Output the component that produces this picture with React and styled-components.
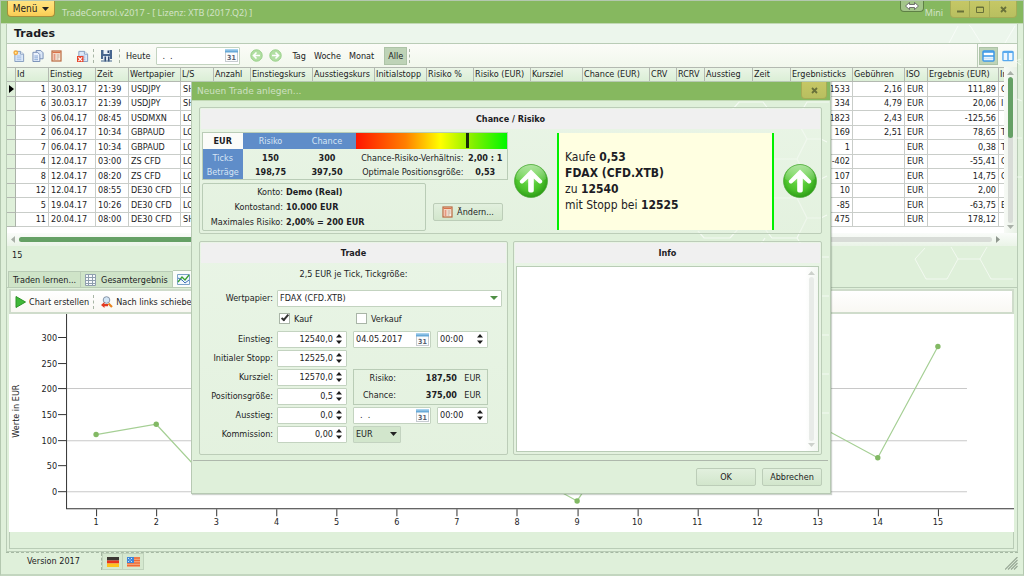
import React from "react";
import styled, { createGlobalStyle, css } from "styled-components";

const c = {
  mint: "#dff0da",
  mintLight: "#ecf6ec",
  bar: "#86b85f",
  line: "#b9ccb6",
  gridLine: "#c9cdc9",
  text: "#1c1c24",
  blue: "#5f8dc9",
  pale: "#f0f0f0",
};

const Global = createGlobalStyle`
  *, *::before, *::after { box-sizing: border-box; }
  body { margin: 0; background: ${c.mint}; overflow: hidden; }
  body, button, input, select, textarea, table {
    font-family: "DejaVu Sans Condensed", "DejaVu Sans", sans-serif;
    font-size: 9px;
    line-height: 12px;
    color: ${c.text};
  }
  button { padding: 0; margin: 0; }
`;

/* ---------- window frame ---------- */

const Window = styled.div`
  position: relative;
  display: flex;
  flex-direction: column;
  min-height: 100vh;
  border: 1px solid #b4c8b0;
  border-bottom: 2px solid #c3d6bf;
  background: ${c.mint};
`;

const TitleBar = styled.header`
  display: flex;
  align-items: flex-start;
  height: 23px;
  padding: 0 6px;
  background: ${c.bar};
  border-bottom: 1px solid #c2d9b5;
`;

const MenuButton = styled.button`
  display: flex;
  align-items: center;
  justify-content: center;
  gap: 5px;
  width: 48px;
  height: 16px;
  border: 1px solid #a58f3b;
  border-top: 0;
  border-radius: 0 0 4px 4px;
  background: linear-gradient(#ffe382, #ffd966 60%, #f8cb55);
  font-size: 10px;
`;

const AppTitle = styled.h1`
  flex: 1;
  margin: 0;
  padding: 5px 0 0 7px;
  font: 400 9px/14px "Noto Sans", sans-serif;
  color: #d2e3c6;
`;

const ResizeTag = styled.button`
  display: flex;
  align-items: center;
  justify-content: center;
  width: 24px;
  height: 11px;
  border: 1px solid #5f8046;
  border-top: 0;
  border-radius: 0 0 4px 4px;
  background: #a3c589;
`;

const MiniButton = styled.button`
  width: 20px;
  margin: 5px 6px 0 0;
  border: 0;
  background: none;
  font: 400 9px/14px "Noto Sans", sans-serif;
  color: #d2e3c6;
`;

const WindowButtons = styled.div`
  display: flex;
`;

const WindowButton = styled.button`
  display: flex;
  align-items: center;
  justify-content: center;
  width: ${(p) => p.$width || 20}px;
  height: 17px;
  border: 1px solid #a5ac55;
  border-top: 0;
  background: linear-gradient(#c6c765, #b8bf60);
  & + & { border-left: 0; }
  &:first-child { border-bottom-left-radius: 4px; }
  &:last-child { border-bottom-right-radius: 4px; }
`;

const Frame = styled.main`
  flex: 1;
  display: flex;
  flex-direction: column;
  margin: 0 5px;
  border: 1px solid ${c.line};
  border-top: 0;
  min-width: 0;
`;

const PageHeading = styled.h2`
  margin: 0;
  padding: 2px 7px;
  height: 20px;
  font: 700 11px/16px "DejaVu Sans", sans-serif;
  background: ${c.mintLight};
  border-bottom: 1px solid ${c.line};
`;

/* ---------- toolbar ---------- */

const Toolbar = styled.div`
  display: flex;
  align-items: center;
  height: 23px;
  background: linear-gradient(#fbfcf8, #f1f7ec);
`;

const ToolGroup = styled.div`
  display: flex;
  align-items: center;
  gap: ${(p) => p.$gap || 0}px;
  padding: 0 ${(p) => p.$pad || 0}px;
`;

const ToolButton = styled.button`
  display: flex;
  align-items: center;
  justify-content: center;
  gap: 3px;
  height: 18px;
  padding: 0 ${(p) => p.$pad || 0}px;
  border: 1px solid transparent;
  background: none;
  white-space: nowrap;
  ${(p) =>
    p.$active &&
    css`
      background: #bed3b7;
      border-color: #adc3a7;
    `}
`;

const Dots = styled.span`
  height: 14px;
  border-left: 1px dashed #a9b6a6;
`;

const ViewGroup = styled(ToolGroup)`
  margin-left: auto;
  height: 100%;
  border-left: 1px solid ${c.line};
`;

const Field = styled.span`
  display: flex;
  align-items: center;
  width: ${(p) => p.$width}px;
  height: ${(p) => p.$height || 17}px;
  padding: 0 ${(p) => p.$right || 4}px 0 2px;
  border: 1px solid #c3d3c0;
  background: #fff;
  border-radius: 1px;
`;

const Input = styled.input`
  flex: 1;
  min-width: 0;
  width: 0;
  height: 100%;
  padding: 0 3px 0 ${(p) => p.$indent || 0}px;
  border: 0;
  outline: 0;
  background: none;
  text-align: ${(p) => p.$align || "left"};
  white-space: pre;
`;

const BareButton = styled.button`
  display: flex;
  flex-direction: column;
  border: 0;
  background: none;
`;

/* ---------- trades grid ---------- */

const GridArea = styled.section`
  display: flex;
  height: 166px;
  background: #fff;
`;

const GridScroll = styled.div`
  flex: 1;
  min-width: 0;
  overflow: hidden;
`;

const Table = styled.table`
  width: 998px;
  height: 160px;
  table-layout: fixed;
  border-collapse: separate;
  border-spacing: 0;
`;

const Th = styled.th`
  height: 15px;
  padding: 0 0 0 1px;
  font-weight: 400;
  text-align: left;
  vertical-align: top;
  white-space: nowrap;
  overflow: hidden;
  background: linear-gradient(#eaf5e6, #dbeed6);
  border: 1px solid #b3b9b1;
  border-left: 0;
`;

const Td = styled.td`
  height: 14px;
  padding: 0 2px;
  text-align: ${(p) => (p.$right ? "right" : "left")};
  white-space: nowrap;
  overflow: hidden;
  border-right: 1px solid ${c.gridLine};
  border-bottom: 1px solid ${c.gridLine};
`;

const RowHead = styled.th`
  padding: 0;
  background: ${c.mint};
  border-right: 1px solid #aab2a8;
  border-bottom: 1px solid #b3b9b1;
  svg { display: block; margin: auto; }
`;

const VScroll = styled.div`
  display: flex;
  flex-direction: column;
  align-items: center;
  gap: 2px;
  width: 13px;
  padding: 4px 0;
  background: linear-gradient(90deg, #f7faf6, #e8f1e5);
`;

const VTrack = styled.div`
  flex: 1;
  width: 5px;
  border-radius: 3px;
  background: #d8dcd7;
  overflow: hidden;
`;

const VThumb = styled.div`
  height: 42%;
  border-radius: 3px;
  background: #65a065;
`;

const HScroll = styled.div`
  display: flex;
  align-items: center;
  gap: 4px;
  height: 13px;
  padding: 0 17px 0 4px;
  background: linear-gradient(#fafcfa, #eaf4e7);
`;

const HTrack = styled.div`
  flex: 1;
  height: 5px;
  border-radius: 3px;
  background: #d8dcd7;
`;

const HThumb = styled.div`
  width: 62%;
  height: 5px;
  border-radius: 3px;
  background: #65a065;
`;

const Count = styled.div`
  padding: 3px 5px;
  height: 24px;
`;

/* ---------- tabs and chart ---------- */

const Tabs = styled.nav`
  display: flex;
  align-items: flex-end;
  height: 17px;
  padding-left: 1px;
`;

const Tab = styled.button`
  display: flex;
  align-items: center;
  gap: 5px;
  height: ${(p) => (p.$active ? 17 : 16)}px;
  padding: 0 4px;
  border: 1px solid ${c.line};
  border-bottom: 0;
  background: ${(p) => (p.$active ? "#fbfdfa" : "#cfe4c8")};
  white-space: nowrap;
  & + & { border-left: 0; }
`;

const Pane = styled.section`
  flex: 1;
  display: flex;
  flex-direction: column;
  border-top: 1px solid ${c.line};
  margin-bottom: 2px;
  padding: 1px 3px 0 2px;
`;

const ChartToolbar = styled.div`
  display: flex;
  align-items: center;
  gap: 3px;
  height: 25px;
  padding: 0 3px;
  border: 2px solid #cfdccb;
  background: linear-gradient(#fff, #f9f8f3);
`;

const ChartBox = styled.div`
  height: 218px;
  background: #fff;
  overflow: hidden;
  svg { display: block; width: 100%; height: 100%; }
`;

const ChartFoot = styled.div`
  flex: 1;
  border: 1px solid ${c.line};
  border-top: 0;
`;

const StatusBar = styled.footer`
  display: flex;
  align-items: flex-start;
  height: 22px;
  margin: 0 5px;
  border-top: 1px dashed #a5b8a2;
`;

const Version = styled.span`
  width: 96px;
  height: 17px;
  padding: 2px 0 0 21px;
  border-right: 1px dashed #a5b8a2;
`;

const FlagButton = styled.button`
  display: flex;
  align-items: center;
  justify-content: center;
  width: 21px;
  height: 17px;
  border: 1px solid #c0d3bc;
  background: #d5e8cf;
  & + & { border-left: 0; }
`;

const Grip = styled.span`
  align-self: center;
  margin-left: auto;
  height: 13px;
`;

/* ---------- dialog ---------- */

const Overlay = styled.div`
  position: absolute;
  inset: 0;
  display: flex;
  justify-content: center;
  align-items: flex-start;
  padding: 80px 2px 0 0;
`;

const Dialog = styled.div`
  position: relative;
  width: 640px;
  border: 1px solid #b7c9b3;
  background: ${c.mint};
  box-shadow: 1px 1px 1px rgba(90, 110, 90, 0.3);
`;

const DialogBar = styled.header`
  display: flex;
  justify-content: space-between;
  height: 19px;
  padding: 0 3px 0 5px;
  background: ${c.bar};
  border-bottom: 1px solid #c2d9b5;
`;

const DialogTitle = styled.h2`
  margin: 0;
  font: 400 9px/18px "DejaVu Sans", sans-serif;
  color: #cfe0c3;
`;

const DialogBody = styled.div`
  position: relative;
  display: flex;
  flex-direction: column;
  gap: 7px;
  padding: 6px 8px 5px 7px;
`;

const Columns = styled.div`
  display: grid;
  grid-template-columns: 309px 1fr;
  gap: 5px;
`;

const Panel = styled.section`
  position: relative;
  display: flex;
  flex-direction: column;
  padding: 1px;
  border: 1px solid #bccdb8;
  border-radius: 2px;
  background: linear-gradient(rgba(240, 248, 238, 0.6), rgba(232, 243, 228, 0.5));
`;

const PanelTitle = styled.h3`
  margin: 0;
  height: 20px;
  font-size: 9px;
  line-height: 20px;
  text-align: center;
  background: ${c.pale};
`;

const RiskRow = styled.div`
  display: flex;
  align-items: center;
  gap: 6px;
  padding: 3px 0 1px 1px;
`;

const RiskLeft = styled.div`
  display: flex;
  flex-direction: column;
  gap: 3px;
  width: 306px;
`;

const RiskTable = styled.table`
  width: 100%;
  table-layout: fixed;
  border-collapse: collapse;
  border: 1px solid ${c.line};
  text-align: center;
  th, td { padding: 0; white-space: nowrap; }
`;

const BlueTh = styled.th`
  height: ${(p) => p.$h || 13}px;
  padding: 0;
  font-weight: 400;
  color: #d7e5f5;
  background: ${c.blue};
`;

const Corner = styled.th`
  height: 16px;
  background: #fbfcf9;
`;

const RiskTd = styled.td`
  font-weight: ${(p) => (p.$label ? 400 : 700)};
  text-align: ${(p) => (p.$label ? "right" : "center")};
`;

const Meter = styled.div`
  height: 16px;
  padding-left: 110px;
  background: linear-gradient(90deg, #ff1500, #ff8000 33%, #ffff00 56%, #80f000 78%, #00f800);
`;

const Marker = styled.div`
  width: 3px;
  height: 15px;
  background: #1a2a08;
`;

const AccountRow = styled.div`
  display: flex;
  align-items: flex-end;
  gap: 7px;
`;

const AccountBox = styled.dl`
  display: grid;
  grid-template-columns: 80px 1fr;
  gap: 3px;
  width: 224px;
  margin: 0;
  padding: 2px 0;
  border: 1px solid ${c.line};
  border-radius: 2px;
  white-space: nowrap;
  dt { text-align: right; }
  dd { margin: 0; font-weight: 700; }
`;

const AccountAction = styled.div`
  padding-bottom: 10px;
`;

const PushButton = styled.button`
  display: flex;
  align-items: center;
  justify-content: center;
  gap: 4px;
  width: ${(p) => p.$width || 60}px;
  height: 18px;
  border: 1px solid #bccdb8;
  border-radius: 2px;
  background: linear-gradient(#e2f0de, #d2e6cc);
`;

const Order = styled.p`
  flex: 0 0 217px;
  height: 97px;
  margin: 0 3px;
  padding: 16px 6px;
  border: solid #00f000;
  border-width: 0 2px;
  background: #ffffe1;
  font-size: 12px;
  line-height: 16px;
`;

const Form = styled.form`
  display: flex;
  flex-direction: column;
  gap: 2px;
  height: 190px;
  padding-top: 4px;
`;

const Hint = styled.p`
  margin: 0 0 6px;
  line-height: 15px;
  text-align: center;
`;

const Row = styled.div`
  display: flex;
  align-items: center;
  height: 17px;
  gap: 6px;
`;

const Label = styled.label`
  width: 72px;
  margin-right: -2px;
  text-align: right;
  white-space: nowrap;
`;

const SelectWrap = styled.span`
  position: relative;
  width: ${(p) => p.$width}px;
  height: 17px;
  svg {
    position: absolute;
    top: 6px;
    right: 4px;
    pointer-events: none;
  }
`;

const Select = styled.select`
  appearance: none;
  display: block;
  width: 100%;
  height: 17px;
  padding: 0 2px;
  border: 1px solid #c3d3c0;
  border-radius: 1px;
  background: ${(p) => (p.$flat ? "#d2e6cc" : "#fff")};
`;

const CheckRow = styled.div`
  display: flex;
  height: 20px;
  padding-left: 78px;
  align-items: center;
`;

const CheckLabel = styled.label`
  display: flex;
  align-items: center;
  gap: 4px;
  width: 77px;
`;

const Check = styled.input`
  appearance: none;
  width: 11px;
  height: 11px;
  margin: 0;
  border: 1px solid #a9b5a7;
  background: #fff;
  &:checked::after {
    content: "";
    display: block;
    width: 4px;
    height: 8px;
    margin: -1px 0 0 3px;
    border: solid #333;
    border-width: 0 2px 2px 0;
    transform: rotate(40deg);
  }
`;

const LowerForm = styled.div`
  display: grid;
  grid-template-columns: 146px 1fr;
`;

const Stack = styled.div`
  display: flex;
  flex-direction: column;
  gap: 2px;
`;

const SideStack = styled(Stack)`
  padding-left: 6px;
`;

const Totals = styled.dl`
  display: grid;
  grid-template-columns: 42px 1fr 20px;
  align-content: space-around;
  column-gap: 4px;
  width: 135px;
  height: 36px;
  margin: 0;
  padding: 0 6px 0 0;
  border: 1px solid ${c.line};
  text-align: right;
  dd { margin: 0; }
`;

const InfoBody = styled.div`
  flex: 1;
  display: flex;
  margin: 3px 1px 1px;
  border: 1px solid ${c.line};
  background: #fff;
`;

const InfoText = styled.textarea`
  flex: 1;
  border: 0;
  resize: none;
  outline: 0;
  background: none;
`;

const InfoScroll = styled(VScroll)`
  background: linear-gradient(90deg, #fff, #f3f7f2);
`;

const InfoTrack = styled(VTrack)`
  background: #e8ebe8;
`;

const Actions = styled.footer`
  display: flex;
  justify-content: flex-end;
  gap: 6px;
  margin: 0 2px 0 1px;
  padding: 7px 6px 7px 0;
  border-top: 1px solid #aeb8ac;
`;

const Backdrop = styled.svg`
  position: absolute;
  top: 0;
  right: 0;
  pointer-events: none;
`;

/* ---------- drawings ---------- */

const Tri = ({ dir = "down", w = 7, h = 4, fill = "#222" }) => {
  const pts = {
    down: `0,0 ${w},0 ${w / 2},${h}`,
    up: `0,${h} ${w},${h} ${w / 2},0`,
    right: `0,0 ${w},${h / 2} 0,${h}`,
    left: `${w},0 0,${h / 2} ${w},${h}`,
  }[dir];
  return (
    <svg width={w} height={h} aria-hidden="true">
      <polygon points={pts} fill={fill} />
    </svg>
  );
};

const PageBase = ({ children }) => (
  <svg width="12" height="12" viewBox="0 0 13 13" aria-hidden="true">
    <path d="M2 1.500h6l3.500 3v8h-9.500z" fill="#dce8f8" stroke="#8099bd" />
    <path d="M8 1.500v3h3.500" fill="#fff" stroke="#8099bd" />
    <path d="M4 6.500h5M4 8.500h5M4 10.500h5" stroke="#9dbbe2" />
    {children}
  </svg>
);

const NewIcon = () => (
  <PageBase>
    <circle cx="3" cy="3" r="2.600" fill="#f3a73d" />
    <circle cx="3" cy="3" r="1.100" fill="#fff0a0" />
  </PageBase>
);

const CopyIcon = () => (
  <svg width="12" height="12" viewBox="0 0 13 13" aria-hidden="true">
    <path d="M4.500 .5h5l2.500 2.500v6.500h-7.500z" fill="#dbe7f7" stroke="#7189b3" />
    <path d="M1 2.500h5l2.500 2.500v7.500h-7.500z" fill="#eaf1fb" stroke="#7189b3" />
    <path d="M2.500 6.500h4M2.500 8.500h4M2.500 10.500h4" stroke="#7ea1d3" />
  </svg>
);

const EditIcon = () => (
  <svg width="11" height="12" viewBox="0 0 11 12" aria-hidden="true">
    <rect x="1" y="1" width="9" height="10" fill="#fbefe2" stroke="#b9683f" strokeWidth="1.200" />
    <path d="M1.500 2.500h8" stroke="#d9734a" strokeWidth="1.400" />
    <path d="M2.500 5h2M2.500 7h2M2.500 9h2" stroke="#d2401f" strokeWidth="1.200" />
    <path d="M5.500 5h3M5.500 7h3M5.500 9h2" stroke="#b39684" strokeWidth="0.900" />
  </svg>
);

const DeleteIcon = () => (
  <PageBase>
    <rect x="0" y="6.500" width="7" height="6.500" fill="#e8452c" />
    <path d="M1.500 8l4 4M5.500 8l-4 4" stroke="#fff" strokeWidth="1.300" />
  </PageBase>
);

const SaveIcon = () => (
  <svg width="13" height="13" viewBox="0 0 13 13" aria-hidden="true">
    <path d="M1 1h11v9H1z" fill="#47668f" />
    <path d="M3.500 1h6v4h-6z" fill="#e9f0f8" />
    <path d="M7.500 1.500h1.500v2.500h-1.500z" fill="#2b4470" />
    <path d="M3 7h7v4H3z" fill="#d7e2ef" />
    <path d="M4.500 7.500h1.500v5h-1.500zM8 7.500h1.500v5H8z" fill="#2b4470" />
    <path d="M1 12h11" stroke="#47668f" />
  </svg>
);

const CalendarIcon = () => (
  <svg width="13" height="13" viewBox="0 0 13 13" aria-hidden="true">
    <rect x="0.500" y="0.500" width="12" height="12" fill="#fbfcfd" stroke="#c6cbd0" />
    <rect x="0" y="0" width="13" height="3.500" fill="#68a9d8" />
    <rect x="0" y="0" width="13" height="1.500" fill="#a9d3ee" />
    <text x="6.500" y="11" fontSize="7" fontWeight="700" textAnchor="middle" fill="#566070">31</text>
  </svg>
);

const RoundArrow = ({ flip }) => (
  <svg width="13" height="13" viewBox="0 0 13 13" aria-hidden="true">
    <circle cx="6.500" cy="6.500" r="5.700" fill="#b2dfa3" stroke="#98cf88" />
    <path
      d={flip ? "M3 6.500h6M6.500 3.500l3 3l-3 3" : "M10 6.500h-6M6.500 3.500l-3 3l3 3"}
      fill="none"
      stroke="#fff"
      strokeWidth="1.600"
    />
  </svg>
);

const RowsIcon = () => (
  <svg width="13" height="12" viewBox="0 0 13 12" aria-hidden="true">
    <rect x="1" y="1" width="11" height="10" rx="1" fill="#fff" stroke="#3c98e8" strokeWidth="1.500" />
    <path d="M1 2h11M1 6h11" stroke="#3c98e8" strokeWidth="1.600" />
    <path d="M2 8.500h9" stroke="#cfe6fa" strokeWidth="2" />
  </svg>
);

const ColsIcon = () => (
  <svg width="12" height="12" viewBox="0 0 13 12" aria-hidden="true">
    <rect x="1" y="1" width="11" height="10" rx="1" fill="#eef7ff" stroke="#58a9ee" strokeWidth="1.500" />
    <path d="M1 2h11M6.500 1v10" stroke="#58a9ee" strokeWidth="1.600" />
  </svg>
);

const BigArrow = () => (
  <svg width="34" height="34" viewBox="0 0 34 34" aria-hidden="true">
    <defs>
      <radialGradient id="ball" cx="45%" cy="40%" r="65%">
        <stop offset="0" stopColor="#74e052" />
        <stop offset="0.600" stopColor="#4cc22c" />
        <stop offset="1" stopColor="#269412" />
      </radialGradient>
      <linearGradient id="shine" x1="0" y1="0" x2="0" y2="1">
        <stop offset="0" stopColor="#fff" stopOpacity="0.550" />
        <stop offset="1" stopColor="#fff" stopOpacity="0.050" />
      </linearGradient>
    </defs>
    <circle cx="17" cy="17" r="16.500" fill="url(#ball)" stroke="#4da83a" strokeWidth="0.700" />
    <path d="M2 15a15 14 0 0 1 30 0q-6 4-15 4t-15-4z" fill="url(#shine)" />
    <path
      d="M17 5.500L28 16.500q1 1.500-.5 2.500q-1.500 1-2.800 0L19.800 14.500V26.500q0 2-2.800 2t-2.800-2V14.500L9.300 19q-1.500 1-2.900 0q-1.300-1.200-.3-2.500z"
      fill="#fff"
    />
  </svg>
);

const Spin = ({ name }) => (
  <BareButton type="button" aria-label={`${name} ändern`}>
    <svg width="6" height="12" viewBox="0 0 6 12" aria-hidden="true">
      <path d="M0 4.500L3 1L6 4.500zM0 7.500h6L3 11z" fill="#1c1c1c" />
    </svg>
  </BareButton>
);

const CloseGlyph = () => (
  <svg width="7" height="7" viewBox="0 0 7 7" aria-hidden="true">
    <path d="M1 1l5 5M6 1l-5 5" stroke="#68713a" strokeWidth="1.800" />
  </svg>
);

const GermanFlag = () => (
  <svg width="12" height="10" viewBox="0 0 12 10" aria-hidden="true">
    <path d="M0 0h12v3.500H0z" fill="#3b3733" />
    <path d="M0 3.500h12v3H0z" fill="#e8321e" />
    <path d="M0 6.500h12V10H0z" fill="#ffc21c" />
  </svg>
);

const UsFlag = () => (
  <svg width="13" height="10" viewBox="0 0 13 10" aria-hidden="true">
    <path d="M0 0h13v10H0z" fill="#f4b48c" />
    <path d="M0 1h13M0 3.500h13M0 6h13M0 8.500h13" stroke="#ee6a34" strokeWidth="1.500" />
    <path d="M0 0h7v6H0z" fill="#3f86d8" />
    <path d="M1 1.500h1M4 1.500h1M2.500 3h1M1 4.500h1M4 4.500h1" stroke="#cfe4fa" />
  </svg>
);

/* ---------- data ---------- */

const columns = [
  ["Id", 33], ["Einstieg", 47], ["Zeit", 33], ["Wertpapier", 52], ["L/S", 33],
  ["Anzahl", 37], ["Einstiegskurs", 62], ["Ausstiegskurs", 62], ["Initialstopp", 52],
  ["Risiko %", 47], ["Risiko (EUR)", 57], ["Kursziel", 52], ["Chance (EUR)", 67],
  ["CRV", 27], ["RCRV", 28], ["Ausstieg", 48], ["Zeit", 38], ["Ergebnisticks", 62],
  ["Gebühren", 52], ["ISO", 23], ["Ergebnis (EUR)", 71], ["Info", 6],
];

const trades = [
  ["1", "30.03.17", "21:39", "USDJPY", "SHORT", "1533", "2,16", "111,89", "C"],
  ["6", "30.03.17", "21:39", "USDJPY", "SHORT", "334", "4,79", "20,06", "I"],
  ["3", "06.04.17", "08:45", "USDMXN", "LONG", "-1823", "2,43", "-125,56", ""],
  ["2", "06.04.17", "10:34", "GBPAUD", "LONG", "169", "2,51", "78,65", "T"],
  ["7", "06.04.17", "10:34", "GBPAUD", "LONG", "1", "", "0,38", "T"],
  ["4", "12.04.17", "03:00", "ZS CFD", "LONG", "-402", "", "-55,41", "C"],
  ["8", "12.04.17", "08:20", "ZS CFD", "LONG", "107", "", "14,75", "C"],
  ["12", "12.04.17", "08:55", "DE30 CFD", "LONG", "10", "", "2,00", ""],
  ["5", "19.04.17", "10:26", "DE30 CFD", "LONG", "-85", "", "-63,75", "E"],
  ["11", "20.04.17", "08:00", "DE30 CFD", "SHORT", "475", "", "178,12", ""],
];

const balance = [112, 132, 6, 85, 85, 30, 45, 47, -17, 161, 140, 150, 130, 67, 283];

function Chart() {
  const px = (i) => 87 + i * 60.07;
  const py = (v) => 178 - v * 0.514;
  return (
    <svg viewBox="0 0 1004 218" preserveAspectRatio="xMinYMin slice" role="img" aria-label="Werte in EUR">
      {[0, 100, 200].map((v) => (
        <line key={v} x1="58" x2="957" y1={Math.round(py(v)) - 0.5} y2={Math.round(py(v)) - 0.5} stroke="#c8c8c8" />
      ))}
      <path d="M57.500 0V194.500H1010" fill="none" stroke="#333" strokeWidth="1" />
      {[0, 50, 100, 150, 200, 250, 300].map((v) => (
        <g key={v}>
          <line x1="49" x2="57" y1={Math.round(py(v)) - 0.5} y2={Math.round(py(v)) - 0.5} stroke="#333" />
          <text x="48" y={Math.round(py(v)) + 3} fontSize="9" textAnchor="end" fill={c.text}>{v}</text>
        </g>
      ))}
      {balance.map((v, i) => (
        <g key={i}>
          <line x1={Math.round(px(i)) + 0.5} x2={Math.round(px(i)) + 0.5} y1="195" y2="202" stroke="#333" />
          <text x={px(i)} y="211" fontSize="9" textAnchor="middle" fill={c.text}>{i + 1}</text>
        </g>
      ))}
      <text transform="translate(10 97) rotate(-90)" fontSize="9" textAnchor="middle" fill={c.text}>Werte in EUR</text>
      <polyline points={balance.map((v, i) => `${px(i)},${py(v)}`).join(" ")} fill="none" stroke="#a5cf94" strokeWidth="1.200" />
      {balance.map((v, i) => (
        <circle key={i} cx={px(i)} cy={py(v)} r="2.700" fill="#82b964" />
      ))}
    </svg>
  );
}

function TradesGrid() {
  return (
    <GridArea>
      <GridScroll>
        <Table>
          <colgroup>
            <col style={{ width: 9 }} />
            {columns.map(([name, w], i) => (
              <col key={name + i} style={{ width: w }} />
            ))}
          </colgroup>
          <thead>
            <tr>
              <Th aria-label="Zeile" />
              {columns.map(([name], i) => (
                <Th key={name + i} scope="col">{name}</Th>
              ))}
            </tr>
          </thead>
          <tbody>
            {trades.map(([id, date, time, paper, side, ticks, fee, result, info], i) => (
              <tr key={id}>
                <RowHead scope="row">{i === 0 && <Tri dir="right" w={5} h={8} fill="#000" />}</RowHead>
                <Td $right>{id}</Td>
                <Td>{date}</Td>
                <Td>{time}</Td>
                <Td>{paper}</Td>
                <Td>{side}</Td>
                {columns.slice(5, 17).map((_, k) => (
                  <Td key={k} />
                ))}
                <Td $right>{ticks}</Td>
                <Td $right>{fee}</Td>
                <Td>EUR</Td>
                <Td $right>{result}</Td>
                <Td>{info}</Td>
              </tr>
            ))}
          </tbody>
        </Table>
      </GridScroll>
      <VScroll>
        <Tri dir="up" w={7} h={4} fill="#a9b0a8" />
        <VTrack><VThumb /></VTrack>
        <Tri w={7} h={4} fill="#a9b0a8" />
      </VScroll>
    </GridArea>
  );
}

const NumberField = ({ id, label, value }) => (
  <Row>
    <Label htmlFor={id}>{label}</Label>
    <Field $width={70}>
      <Input id={id} defaultValue={value} $align="right" />
      <Spin name={label} />
    </Field>
  </Row>
);

const DateTime = ({ name, date, indent }) => (
  <Row>
    <Field $width={78} $right={1}>
      <Input aria-label={`${name} Datum`} defaultValue={date} $indent={indent} />
      <BareButton type="button" aria-label="Kalender"><CalendarIcon /></BareButton>
    </Field>
    <Field $width={51}>
      <Input aria-label={`${name} Uhrzeit`} defaultValue="00:00" />
      <Spin name={`${name} Uhrzeit`} />
    </Field>
  </Row>
);

function TradeDialog() {
  return (
    <Dialog role="dialog" aria-label="Neuen Trade anlegen">
      <DialogBar>
        <DialogTitle>Neuen Trade anlegen...</DialogTitle>
        <WindowButtons>
          <WindowButton $width={26} aria-label="Schließen"><CloseGlyph /></WindowButton>
        </WindowButtons>
      </DialogBar>
      <DialogBody>
        <Backdrop width="140" height="360" viewBox="0 0 140 360" aria-hidden="true">
          <path
            d="M42 9l7-8h24l6 8M108 16l9-15h22M106 18l11 20h14l6 3M117 38l-10 20H82M107 58l10 20h14l6-3M107 97H82M117 117l-10-20M117 78l-10 20M117 117h14l6-3M117 117l-10 20H82l-7-9M40 137h-26l-6-7M40 137l8-9M75 137l-6 9M107 137l6 9M131 156h8M131 195h8M131 234h8M131 273h8M131 312h8"
            fill="none"
            stroke="#fff"
            strokeOpacity="0.650"
            strokeWidth="1.200"
          />
        </Backdrop>
        <Panel>
          <PanelTitle>Chance / Risiko</PanelTitle>
          <RiskRow>
            <RiskLeft>
              <RiskTable>
                <colgroup>
                  <col style={{ width: 40 }} />
                  <col style={{ width: 56 }} />
                  <col style={{ width: 57 }} />
                  <col style={{ width: 108 }} />
                  <col />
                </colgroup>
                <thead>
                  <tr>
                    <Corner>EUR</Corner>
                    <BlueTh>Risiko</BlueTh>
                    <BlueTh>Chance</BlueTh>
                    <th colSpan={2}><Meter><Marker /></Meter></th>
                  </tr>
                </thead>
                <tbody>
                  <tr>
                    <BlueTh $h={17}>Ticks</BlueTh>
                    <RiskTd>150</RiskTd>
                    <RiskTd>300</RiskTd>
                    <RiskTd $label>Chance-Risiko-Verhältnis:</RiskTd>
                    <RiskTd>2,00 : 1</RiskTd>
                  </tr>
                  <tr>
                    <BlueTh>Beträge</BlueTh>
                    <RiskTd>198,75</RiskTd>
                    <RiskTd>397,50</RiskTd>
                    <RiskTd $label>Optimale Positionsgröße:</RiskTd>
                    <RiskTd>0,53</RiskTd>
                  </tr>
                </tbody>
              </RiskTable>
              <AccountRow>
                <AccountBox>
                  <dt>Konto:</dt><dd>Demo (Real)</dd>
                  <dt>Kontostand:</dt><dd>10.000 EUR</dd>
                  <dt>Maximales Risiko:</dt><dd>2,00% = 200 EUR</dd>
                </AccountBox>
                <AccountAction>
                  <PushButton $width={70}><EditIcon />Ändern...</PushButton>
                </AccountAction>
              </AccountRow>
            </RiskLeft>
            <BigArrow />
            <Order>
              Kaufe <b>0,53</b><br />
              <b>FDAX (CFD.XTB)</b><br />
              zu <b>12540</b><br />
              mit Stopp bei <b>12525</b>
            </Order>
            <BigArrow />
          </RiskRow>
        </Panel>
        <Columns>
          <Panel>
            <PanelTitle>Trade</PanelTitle>
            <Form onSubmit={(e) => e.preventDefault()}>
              <Hint>2,5 EUR je Tick, Tickgröße:</Hint>
              <Row>
                <Label htmlFor="paper">Wertpapier:</Label>
                <SelectWrap $width={225}>
                  <Select id="paper"><option>FDAX (CFD.XTB)</option></Select>
                  <Tri w={8} h={4} fill="#4f8f45" />
                </SelectWrap>
              </Row>
              <CheckRow>
                <CheckLabel><Check type="checkbox" defaultChecked />Kauf</CheckLabel>
                <CheckLabel><Check type="checkbox" />Verkauf</CheckLabel>
              </CheckRow>
              <LowerForm>
                <Stack>
                  <NumberField id="entry" label="Einstieg:" value="12540,0" />
                  <NumberField id="stop" label="Initialer Stopp:" value="12525,0" />
                  <NumberField id="target" label="Kursziel:" value="12570,0" />
                  <NumberField id="size" label="Positionsgröße:" value="0,5" />
                  <NumberField id="exit" label="Ausstieg:" value="0,0" />
                  <NumberField id="fee" label="Kommission:" value="0,00" />
                </Stack>
                <SideStack>
                  <DateTime name="Einstieg" date="04.05.2017" />
                  <Row />
                  <Totals>
                    <dt>Risiko:</dt><dd><b>187,50</b></dd><dd>EUR</dd>
                    <dt>Chance:</dt><dd><b>375,00</b></dd><dd>EUR</dd>
                  </Totals>
                  <DateTime name="Ausstieg" date=".  ." indent={4} />
                  <SelectWrap $width={48}>
                    <Select $flat aria-label="Währung"><option>EUR</option></Select>
                    <Tri w={7} h={4} />
                  </SelectWrap>
                </SideStack>
              </LowerForm>
            </Form>
          </Panel>
          <Panel>
            <PanelTitle>Info</PanelTitle>
            <InfoBody>
              <InfoText aria-label="Info" />
              <InfoScroll>
                <Tri dir="up" w={7} h={4} fill="#cdd1cc" />
                <InfoTrack />
                <Tri w={7} h={4} fill="#cdd1cc" />
              </InfoScroll>
            </InfoBody>
          </Panel>
        </Columns>
      </DialogBody>
      <Actions>
        <PushButton>OK</PushButton>
        <PushButton>Abbrechen</PushButton>
      </Actions>
    </Dialog>
  );
}

export default function App() {
  return (
    <>
      <Global />
      <Window>
        <TitleBar>
          <MenuButton>Menü <Tri w={7} h={4} /></MenuButton>
          <AppTitle>TradeControl.v2017 - [ Lizenz: XTB (2017.Q2) ]</AppTitle>
          <ResizeTag aria-label="Breite">
            <svg width="14" height="8" viewBox="0 0 14 8" aria-hidden="true">
              <path d="M.5 4l4-3.500v2h5v-2l4 3.500l-4 3.500v-2h-5v2z" fill="#fff" stroke="#555" strokeWidth="0.800" />
            </svg>
          </ResizeTag>
          <MiniButton>Mini</MiniButton>
          <WindowButtons>
            <WindowButton aria-label="Minimieren">
              <svg width="7" height="7" aria-hidden="true"><path d="M0 5.500h7" stroke="#68713a" strokeWidth="2" /></svg>
            </WindowButton>
            <WindowButton aria-label="Maximieren">
              <svg width="8" height="7" aria-hidden="true"><path d="M.5 1h7v5.500h-7zM.5 1.500h7" fill="none" stroke="#68713a" /></svg>
            </WindowButton>
            <WindowButton $width={27} aria-label="Beenden"><CloseGlyph /></WindowButton>
          </WindowButtons>
        </TitleBar>
        <Frame>
          <PageHeading>Trades</PageHeading>
          <Toolbar>
            <ToolGroup $gap={5} $pad={5}>
              <ToolButton aria-label="Neu"><NewIcon /></ToolButton>
              <ToolButton aria-label="Kopieren"><CopyIcon /></ToolButton>
              <ToolButton aria-label="Bearbeiten"><EditIcon /></ToolButton>
            </ToolGroup>
            <ToolGroup $gap={3} $pad={8}>
              <ToolButton aria-label="Löschen"><DeleteIcon /></ToolButton>
              <Dots />
              <ToolButton $pad={2} aria-label="Speichern"><SaveIcon /></ToolButton>
              <Dots />
              <ToolButton $pad={2}>Heute</ToolButton>
              <Field $width={84} $height={18} $right={1}>
                <Input aria-label="Datum" defaultValue=".  ." $indent={3} />
                <BareButton aria-label="Kalender"><CalendarIcon /></BareButton>
              </Field>
            </ToolGroup>
            <ToolGroup $gap={4} $pad={1}>
              <ToolButton aria-label="Zurück"><RoundArrow /></ToolButton>
              <ToolButton aria-label="Vor"><RoundArrow flip /></ToolButton>
            </ToolGroup>
            <ToolGroup $pad={4}>
              <ToolButton $pad={3}>Tag</ToolButton>
              <ToolButton $pad={3}>Woche</ToolButton>
              <ToolButton $pad={3}>Monat</ToolButton>
            </ToolGroup>
            <ToolGroup $gap={2} $pad={2}>
              <ToolButton $active $pad={3}>Alle</ToolButton>
              <Dots />
            </ToolGroup>
            <ViewGroup $gap={2} $pad={1}>
              <ToolButton $active $pad={2} aria-label="Untereinander"><RowsIcon /></ToolButton>
              <ToolButton $pad={1} aria-label="Nebeneinander"><ColsIcon /></ToolButton>
            </ViewGroup>
          </Toolbar>
          <TradesGrid />
          <HScroll>
            <Tri dir="left" w={4} h={7} fill="#a9b0a8" />
            <HTrack><HThumb /></HTrack>
            <Tri dir="right" w={4} h={7} fill="#8f978e" />
          </HScroll>
          <Count>15</Count>
          <Tabs>
            <Tab>Traden lernen...</Tab>
            <Tab>
              <svg width="11" height="12" viewBox="0 0 11 12" aria-hidden="true">
                <path d="M.5 .5h10v11H.5zM.5 3.500h10M.5 6.500h10M.5 9.500h10M3.500 .5v11M7.500 .5v11" fill="#f7fafc" stroke="#8f9fae" />
              </svg>
              Gesamtergebnis
            </Tab>
            <Tab $active>
              <svg width="13" height="11" viewBox="0 0 13 11" aria-hidden="true">
                <path d="M.5 .5h12v10H.5z" fill="#f3f9ff" stroke="#7ca3c7" />
                <path d="M1 8l4-5l3 3l4-5" fill="none" stroke="#38a032" strokeWidth="1.300" />
                <path d="M1 4l4 2l3 3l4-3" fill="none" stroke="#3c6fb5" />
              </svg>
              Charts
            </Tab>
          </Tabs>
          <Pane>
            <ChartToolbar>
              <ToolButton>
                <svg width="11" height="12" viewBox="0 0 11 12" aria-hidden="true">
                  <path d="M1 .5L10.500 6L1 11.500z" fill="#3fb838" stroke="#2c9427" />
                </svg>
                Chart erstellen
              </ToolButton>
              <Dots />
              <ToolButton $pad={3}>
                <svg width="12" height="12" viewBox="0 0 12 12" aria-hidden="true">
                  <path d="M7.500 7.500l3.500 3.500" stroke="#e8841e" strokeWidth="2.200" />
                  <circle cx="5.500" cy="4" r="3.300" fill="#d3e6f6" stroke="#8795a8" />
                  <path d="M0 9l3.500-3v2H7v2.200H3.500V12z" fill="#e23a22" />
                </svg>
                Nach links schieben
              </ToolButton>
            </ChartToolbar>
            <ChartBox><Chart /></ChartBox>
            <ChartFoot />
          </Pane>
        </Frame>
        <StatusBar>
          <Version>Version 2017</Version>
          <FlagButton aria-label="Deutsch"><GermanFlag /></FlagButton>
          <FlagButton aria-label="English"><UsFlag /></FlagButton>
          <Grip>
            <svg width="13" height="13" viewBox="0 0 13 13" aria-hidden="true">
              <path d="M0 12.500L12.500 0M3 12.500L12.500 3M6 12.500L12.500 6M9 12.500L12.500 9" stroke="#98a896" strokeWidth="1.200" />
            </svg>
          </Grip>
        </StatusBar>
        <Backdrop width="120" height="290" viewBox="0 0 120 290" aria-hidden="true">
          <path
            d="M46 42l9-17M68 26l10 16M68 26l-2-2M102 42l10-17M118 58l-6 2l6 4M12 258l10-11M12 258l11 20h21l11-20l-7-12M55 258h22l7-12M77 258l11 20h22M114 98l5 2M114 137h5M114 176h5"
            fill="none"
            stroke="#fff"
            strokeOpacity="0.600"
          />
        </Backdrop>
        <Overlay><TradeDialog /></Overlay>
      </Window>
    </>
  );
}
